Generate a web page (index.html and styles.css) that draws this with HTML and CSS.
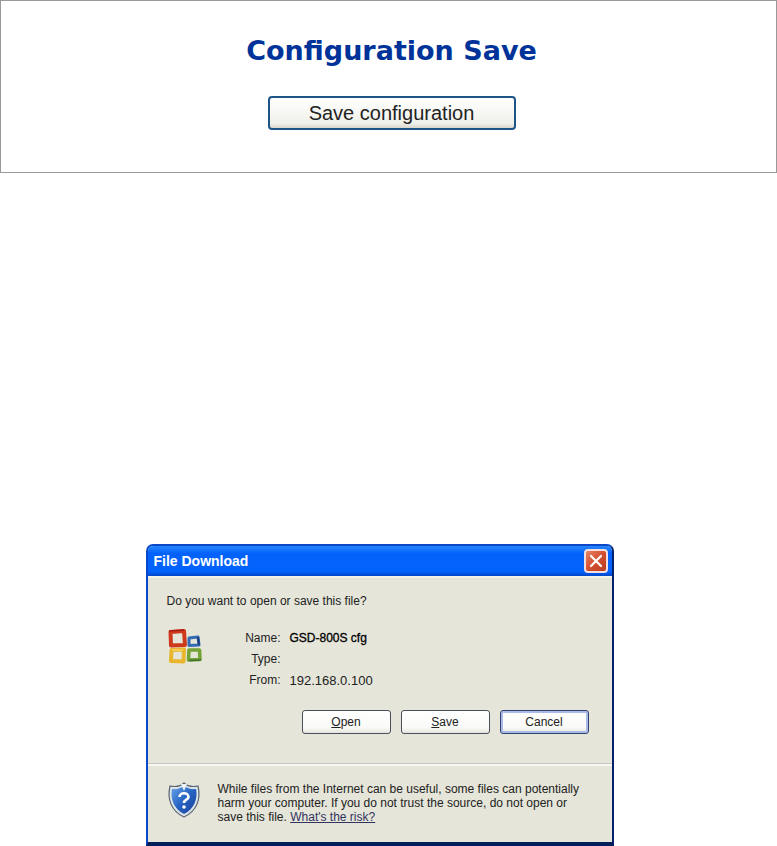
FILE: index.html
```html
<!DOCTYPE html>
<html lang="en">
<head>
    <meta charset="UTF-8">
    <meta name="viewport" content="width=device-width, initial-scale=1.0">
    <title>Configuration Save</title>
    <link rel="stylesheet" href="styles.css">
</head>
<body>
    <section class="config-panel">
        <h1>Configuration Save</h1>
        <button type="button" class="save-config">Save configuration</button>
    </section>

    <main class="dialog-area">
        <div class="dialog" role="dialog" aria-labelledby="dialogTitle">
            <div class="title-bar">
                <h2 id="dialogTitle">File Download</h2>
                <button type="button" class="close-button" aria-label="Close">
                    <svg width="14" height="14" viewBox="0 0 14 14">
                        <path d="M2 2L12 12M12 2L2 12" stroke="#fff" stroke-width="2.2" stroke-linecap="round"/>
                    </svg>
                </button>
            </div>

            <div class="dialog-body">
                <p class="question">Do you want to open or save this file?</p>

                <div class="file-info">
                    <svg class="file-icon" width="36" height="36" viewBox="0 0 36 36" fill="none">
                        <g stroke-linejoin="round">
                            <path d="M3.5 4L17 3L18 17L4 17.5Z" stroke="#cf3a1c" stroke-width="4"/>
                            <path d="M2 3L17 2" stroke="#a81e12" stroke-width="1.5"/>
                            <path d="M22 10L31 9L32 17L22 17.5Z" stroke="#3469b4" stroke-width="3"/>
                            <path d="M31 9L32 17" stroke="#1d3f7c" stroke-width="2"/>
                            <path d="M4.5 22L17 21.5L16.5 33.5L4 33Z" stroke="#e9b52c" stroke-width="4"/>
                            <path d="M5 22L16 22" stroke="#f4d466" stroke-width="1.5"/>
                            <path d="M22 22L32.5 22L33 31.5L21.5 32Z" stroke="#75a336" stroke-width="3.6"/>
                            <path d="M22 32.5L34 32" stroke="#3f7230" stroke-width="1.5"/>
                        </g>
                    </svg>
                    <dl>
                        <dt>Name:</dt>
                        <dd class="file-name">GSD-800S cfg</dd>
                        <dt>Type:</dt>
                        <dd></dd>
                        <dt>From:</dt>
                        <dd class="file-host">192.168.0.100</dd>
                    </dl>
                </div>

                <div class="buttons">
                    <button type="button"><u>O</u>pen</button>
                    <button type="button"><u>S</u>ave</button>
                    <button type="button" class="default">Cancel</button>
                </div>
            </div>

            <div class="dialog-footer">
                <svg class="shield" width="34" height="36" viewBox="0 0 34 36">
                    <defs>
                        <linearGradient id="shieldBlue" x1="0" y1="0" x2="1" y2="1">
                            <stop offset="0" stop-color="#67a3e8"/>
                            <stop offset="0.5" stop-color="#2563c4"/>
                            <stop offset="1" stop-color="#1a3f96"/>
                        </linearGradient>
                    </defs>
                    <path d="M17 1C20 4 26 5 31 4C34 17 30 29 17 35C4 29 0 17 3 4C8 5 14 4 17 1Z" fill="#dce4e9" stroke="#59656f" stroke-width="1.2"/>
                    <path d="M17 4C20 6.5 25 7.5 29 7C31 17 27 27 17 32C7 27 3 17 5 7C9 7.5 14 6.5 17 4Z" fill="url(#shieldBlue)"/>
                    <path d="M14 2L17 9L20 2Z" fill="#eef3f7"/>
                    <path d="M12.5 15C12.5 10 21.5 10 21.5 15C21.5 18 17 17.5 17 21" fill="none" stroke="#fff" stroke-width="2.6"/>
                    <circle cx="17" cy="25" r="1.8" fill="#fff"/>
                </svg>
                <p>While files from the Internet can be useful, some files can potentially harm your computer. If you do not trust the source, do not open or save this file. <a href="#risk">What's the risk?</a></p>
            </div>
        </div>
    </main>
</body>
</html>
```
FILE: styles.css
```css
* {
    box-sizing: border-box;
}

body {
    margin: 0;
    background-color: #fff;
    color: #222;
    font-family: "Liberation Sans", Arial, sans-serif;
    font-size: 12px;
}

h1, h2, p, dl, dd {
    margin: 0;
}

button {
    font-family: inherit;
    color: #222;
    padding: 0;
}

.config-panel {
    display: flex;
    flex-direction: column;
    align-items: center;
    padding: 34px 0 42px 6px;
    border: 1px solid #999;
}

.config-panel h1 {
    margin-bottom: 29px;
    color: #003399;
    font-family: "DejaVu Sans", Verdana, sans-serif;
    font-size: 27px;
    line-height: 32px;
}

.save-config {
    width: 248px;
    height: 34px;
    border: 2px solid #1d5487;
    border-radius: 4px;
    background: linear-gradient(#fff, #f0f0ea 85%, #d8d5cb);
    font-size: 20px;
}

.dialog-area {
    display: flex;
    justify-content: center;
    padding: 371px 18px 0 0;
}

.dialog {
    width: 468px;
    border: 2px solid #0a48c8;
    border-right-color: #06206c;
    border-bottom: 4px solid #031f58;
    border-radius: 7px 7px 0 0;
    background-color: #e5e5d9;
    overflow: hidden;
}

.title-bar {
    display: flex;
    align-items: center;
    justify-content: space-between;
    height: 30px;
    padding: 0 4px 0 6px;
    background: linear-gradient(#2585fb, #0362fb 25%, #0362fb 85%, #0347c9);
}

.title-bar h2 {
    color: #fff;
    font-size: 14px;
}

.close-button {
    display: flex;
    align-items: center;
    justify-content: center;
    width: 24px;
    height: 24px;
    border: 2px solid #f4dede;
    border-radius: 4px;
    background: linear-gradient(135deg, #e88468, #d4502f 50%, #b83c22);
}

.dialog-body {
    padding: 14px 23px 29px 19px;
    border-top: 2px solid #f3f5ea;
    border-bottom: 1px solid #c6c6bf;
}

.question {
    line-height: 18px;
}

.file-info {
    display: flex;
    margin-top: 18px;
}

.file-info dl {
    display: grid;
    grid-template-columns: 78px 1fr;
    column-gap: 9px;
    grid-auto-rows: 21px;
    line-height: 21px;
}

.file-info dt {
    text-align: right;
}

.file-name {
    color: #000;
    -webkit-text-stroke: 0.3px #000;
}

.file-host {
    font-size: 13px;
}

.buttons {
    display: flex;
    justify-content: flex-end;
    gap: 10px;
    margin-top: 19px;
}

.buttons button {
    width: 89px;
    height: 24px;
    border: 1px solid #4b4f5c;
    border-radius: 3px;
    background: linear-gradient(#fff, #fafaf8 75%, #e4e4de);
    font-size: 12px;
}

.buttons .default {
    border-color: #34406f;
    box-shadow: inset 0 0 0 2px #a9bbe6;
}

.dialog-footer {
    display: flex;
    gap: 17px;
    padding: 16px 18px 18px 19px;
    border-top: 2px solid #f8f8f2;
}

.dialog-footer p {
    flex: 1;
    line-height: 14px;
}

.dialog-footer a {
    color: #33335f;
}

.file-icon, .shield {
    flex: none;
}
```
